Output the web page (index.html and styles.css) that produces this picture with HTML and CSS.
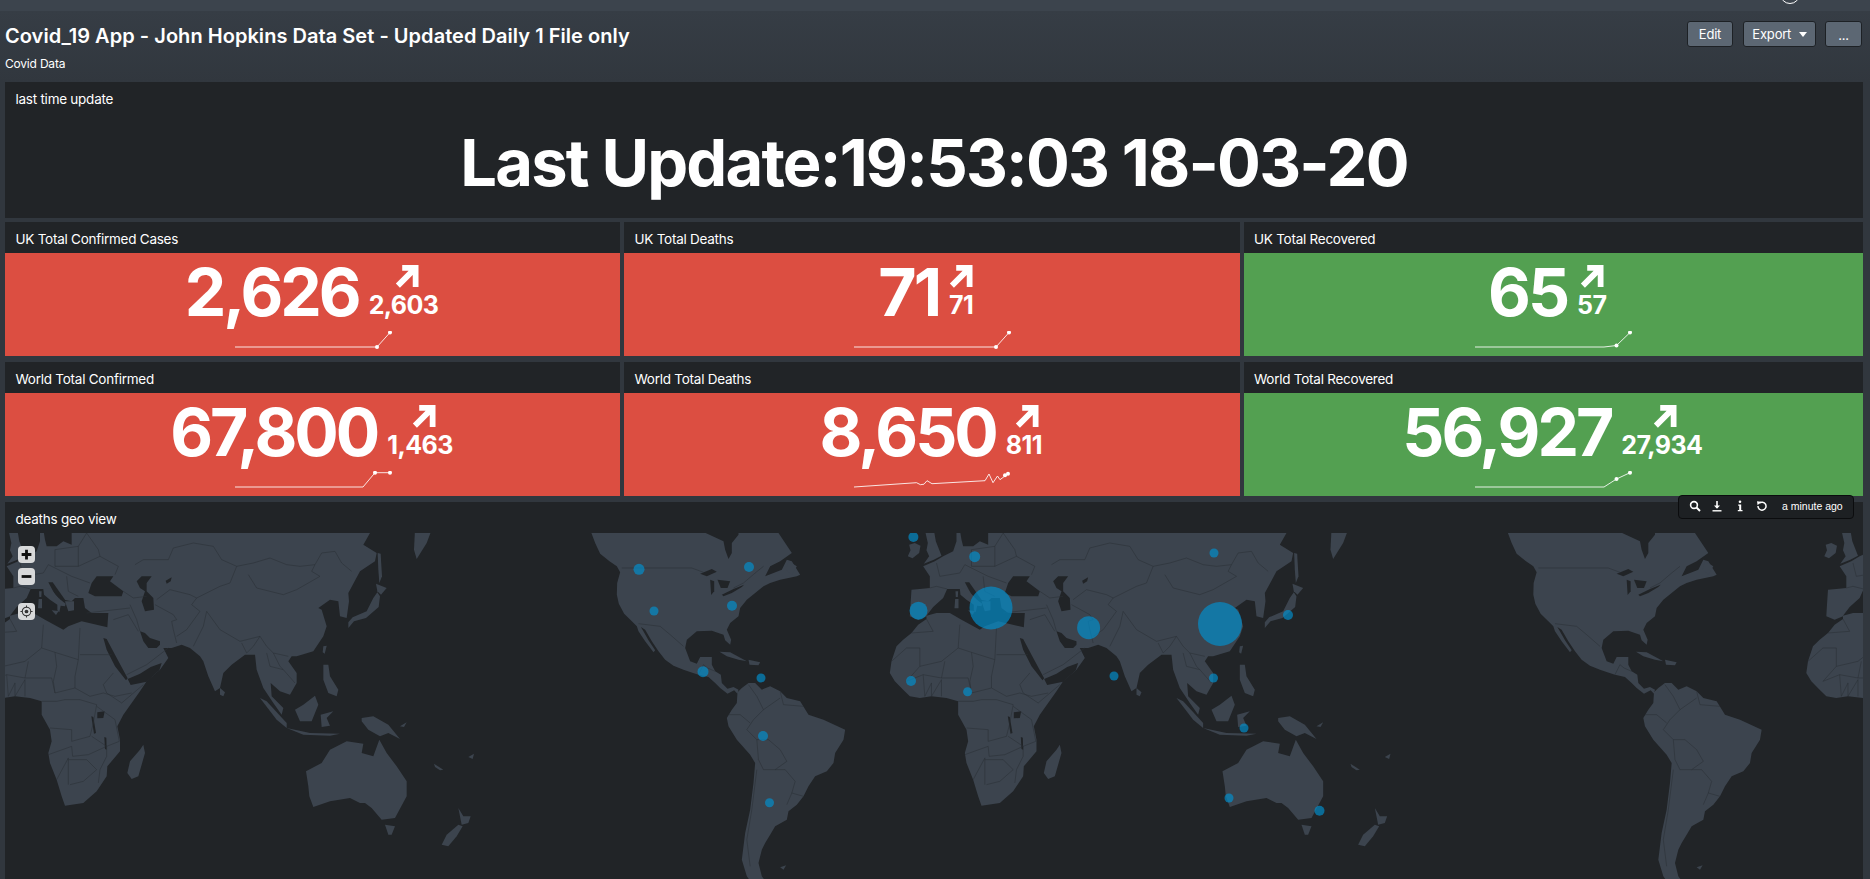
FILE: index.html
```html
<!DOCTYPE html>
<html lang="en">
<head>
<meta charset="utf-8">
<title>Covid_19 App</title>
<link rel="stylesheet" href="styles.css">
</head>
<body>
<div class="topbar"><span class="user-ring"></span></div>
<header class="dash-head">
  <div class="dash-titles">
    <h1>Covid_19 App - John Hopkins Data Set - Updated Daily 1 File only</h1>
    <p>Covid Data</p>
  </div>
  <div class="dash-actions">
    <button class="btn btn-edit">Edit</button>
    <button class="btn btn-export">Export <i class="caret"></i></button>
    <button class="btn btn-more">...</button>
  </div>
</header>

<svg class="defs" width="0" height="0" aria-hidden="true">
  <defs>
    <g id="arrow"><path d="M7 3H21V23M21 3L2.5 21.5" fill="none" stroke="#fff" stroke-width="6"/></g>
    <g id="world">
      <g class="land">
        <!-- Afro-Eurasia -->
        <path d="M120,-10 120,25 110,55 80,70 55,85 20,100 40,130 40,165 10,168 -15,170 -18,215 -20,250 5,260 30,250 30,258 5,275 -15,300 -40,320 -60,340 -75,385 -80,420 -65,445 -40,470 -20,490 10,495 45,490 90,495 125,505 125,545 150,590 155,625 145,660 150,690 170,740 185,790 195,818 250,810 290,775 320,730 322,700 360,655 360,620 352,580 370,545 420,475 440,445 480,410 505,375 490,345 515,345 545,335 570,345 600,370 610,385 625,430 645,475 660,465 670,420 695,395 735,365 765,365 770,410 790,465 820,510 845,545 850,525 815,490 812,450 840,475 870,485 890,450 890,420 865,385 875,370 890,370 940,355 970,310 980,280 965,230 955,225 990,200 1015,205 1020,250 1040,255 1047,205 1045,180 1080,115 1125,85 1130,60 1090,35 1110,0 1115,-10Z"/>
        <!-- Ireland, Great Britain -->
        <path d="M-22,35 -5,30 12,38 8,60 -12,76 -26,70 -18,52Z"/>
        <path d="M25,-10 52,-10 58,25 68,50 75,68 52,80 22,92 38,70 30,52 34,30Z"/>
        <!-- Madagascar, Sri Lanka -->
        <path d="M430,635 435,660 415,730 395,738 382,720 390,685 420,650Z"/>
        <path d="M660,465 675,478 670,490 660,485Z"/>
        <g transform="translate(840 0)">
          <!-- Kamchatka, Sakhalin, Japan -->
          <path d="M405,-10 455,-10 440,30 410,78 402,50Z"/>
          <path d="M293,60 302,62 306,130 298,150 295,110Z"/>
          <path d="M205,285 205,268 218,253 260,235 280,195 292,178 300,190 296,222 258,255 222,265Z"/>
          <path d="M288,152 320,165 303,185 292,175Z"/>
          <path d="M130,340 140,338 134,362 128,358Z"/>
          <path d="M130,395 145,395 150,430 175,470 170,490 145,480 130,440Z"/>
          <path d="M45,530 70,515 105,488 115,515 95,565 60,565Z"/>
          <path d="M122,545 160,535 140,555 150,578 125,582Z"/>
          <path d="M245,555 280,550 325,575 360,618 325,600 300,610 265,590 245,565Z"/>
          <path d="M20,585 90,600 180,602 150,608 70,605Z"/>
          <path d="M-60,495 -40,505 20,570 20,585 -10,560Z"/>
          <path d="M78,715 125,690 150,650 200,625 250,632 245,660 280,670 298,620 320,660 350,700 380,745 380,790 345,855 305,860 275,825 255,810 240,810 210,795 150,805 100,822 88,790 85,760Z"/>
          <path d="M315,875 345,880 335,905 325,905Z"/>
          <path d="M485,935 500,905 535,875 548,880 530,910 505,940Z"/>
          <path d="M535,825 550,850 572,850 565,870 545,875 540,850Z"/>
          <path d="M462,692 490,710 480,712 465,702Z"/>
          <path d="M565,672 582,662 578,678Z"/>
          <path d="M360,580 380,568 372,582Z"/>
        </g>
        <g transform="translate(-999 0)">
          <!-- North & Central America -->
          <path d="M20,-10 35,30 50,62 78,85 100,100 110,118 101,150 100,185 106,212 122,242 145,265 160,280 165,295 185,325 210,358 215,352 195,322 178,292 172,282 185,290 205,325 225,355 245,380 270,398 300,410 322,418 345,425 375,432 395,450 410,465 432,482 452,472 462,482 465,470 450,462 432,467 415,450 412,425 395,415 385,395 385,372 350,372 340,392 320,385 305,345 310,320 340,295 385,293 420,305 425,322 440,335 443,320 430,290 440,270 465,250 470,225 490,200 515,180 540,160 560,150 590,140 640,130 650,125 625,85 610,80 595,110 545,130 560,100 590,85 625,60 585,0 580,-10 465,-10 465,5 445,30 445,60 435,78 425,50 420,25 345,-10Z"/>
          <path d="M615,85 640,100 625,125 608,110Z"/>
          <!-- Caribbean -->
          <path d="M408,356 440,358 490,385 465,380 430,370Z"/>
          <path d="M495,380 530,388 525,397 498,395Z"/>
          <!-- South America -->
          <path d="M462,478 475,465 495,450 515,450 535,470 560,460 590,475 610,495 650,505 675,545 720,560 785,590 780,620 755,660 750,690 730,715 695,730 675,760 660,790 640,815 615,835 610,860 575,880 560,905 545,930 535,950 525,990 535,1030 550,1050 505,1050 490,1030 475,980 485,900 500,830 510,750 515,690 500,665 460,620 435,580 430,555 445,530 460,510Z"/>
          <path d="M590,1003 608,997 600,1010Z"/>
        </g>
      </g>
      <g class="water">
        <path d="M130,-10 215,-10 215,35 190,25 170,40 140,40 135,20Z"/>
        <path d="M30,248 50,222 80,195 92,168 130,168 165,195 215,205 225,195 250,195 255,225 275,240 325,240 322,283 245,265 205,280 190,290 135,260 100,240 60,240Z"/>
        <path d="M145,148 158,148 195,200 190,208 165,185Z"/>
        <path d="M265,180 275,150 290,130 340,130 330,145 370,175 365,190 315,190 285,190Z"/>
        <path d="M410,145 425,130 455,130 440,150 440,175 460,195 462,230 435,235 425,205 435,175 420,165Z"/>
        <path d="M497,143 515,133 512,145 500,152Z"/>
        <path d="M310,315 320,318 345,365 383,436 378,442 345,400 320,350Z"/>
        <path d="M383,438 420,422 452,402 485,390 478,412 440,446 392,456Z"/>
        <path d="M420,295 435,300 450,315 480,325 480,335 470,345 445,345 430,325Z"/>
        <path d="M292,538 314,535 310,555 292,556Z"/>
        <path d="M274,550 280,552 288,600 282,602Z"/>
        <path d="M313,612 319,614 320,650 315,648Z"/>
        <g transform="translate(-999 0)">
          <path d="M350,122 385,108 400,116 370,130Z"/>
          <path d="M380,140 392,145 392,175 383,186Z"/>
          <path d="M402,140 440,145 432,165 412,165Z"/>
          <path d="M415,185 450,168 482,155 475,162 445,180 420,190Z"/>
        </g>
      </g>
      <g class="land">
        <path d="M130,168 150,165 175,195 197,212 195,220 182,218 178,238 172,232 172,215 150,200 132,185Z"/>
        <path d="M155,232 176,234 168,246Z"/>
        <path d="M116,198 126,198 126,226 114,226Z"/>
        <path d="M117,175 125,175 124,192 118,192Z"/>
        <path d="M195,205 222,205 222,232 205,235Z"/>
      </g>
      <g class="borders">
        <polyline points="130,275 125,345 165,358 235,380 240,285"/>
        <polyline points="240,365 335,365"/>
        <polyline points="165,358 170,400 160,445 165,480 225,465 270,490 310,480 345,490 395,480"/>
        <polyline points="235,380 225,430 225,465"/>
        <polyline points="340,420 310,455 320,480 365,510 430,455"/>
        <polyline points="125,505 170,505 195,500 240,500 290,515 280,570 270,610 215,625 215,590 150,585"/>
        <polyline points="290,520 345,560 358,625 320,640 275,610"/>
        <polyline points="145,665 215,640 218,670 265,665 320,640"/>
        <polyline points="170,740 205,675 205,755"/>
        <polyline points="205,680 260,680 290,710 250,745 210,755"/>
        <polyline points="320,640 320,670 300,710 295,750"/>
        <polyline points="-75,385 -30,345 10,345 10,400 75,385 125,345"/>
        <polyline points="10,400 -30,445 20,425 75,435 85,385"/>
        <polyline points="20,425 25,490 45,450 45,490 75,440 75,490"/>
        <polyline points="75,435 155,435 165,480"/>
        <polyline points="30,258 50,295 -15,300"/>
        <polyline points="405,95 430,80 505,80 520,45 580,30 640,40 665,80 710,100 760,90 810,75 860,95 900,100 945,95 965,60 1005,55 1025,90 1055,115"/>
        <polyline points="745,125 770,165 850,185 890,170 960,130 935,115 945,95"/>
        <polyline points="710,100 690,150 660,160 590,195 575,215"/>
        <polyline points="470,200 510,170 570,185 590,195"/>
        <polyline points="465,215 520,245 530,260 515,265 520,290 530,330"/>
        <polyline points="575,215 600,235 560,290 530,310"/>
        <polyline points="620,235 610,280 580,340"/>
        <polyline points="620,235 660,290 720,325 780,310 800,340 820,360 865,370"/>
        <polyline points="725,330 740,360 760,340 780,310"/>
        <polyline points="800,360 810,400 850,410 885,450"/>
        <polyline points="820,360 840,400 850,410"/>
        <polyline points="390,215 410,260 420,295"/>
        <polyline points="260,240 390,225"/>
        <polyline points="340,260 385,245 415,295"/>
        <polyline points="380,425 440,395 505,345"/>
        <polyline points="370,175 400,195 440,190"/>
        <polyline points="300,70 355,100 345,125"/>
        <polyline points="165,50 235,40 235,100 165,100 165,50"/>
        <polyline points="145,95 215,130 270,150"/>
        <polyline points="235,40 260,0 295,50 300,70"/>
        <polyline points="235,100 300,70"/>
        <polyline points="60,90 70,130 130,120 145,95"/>
        <polyline points="40,165 60,160 92,168"/>
        <polyline points="200,130 205,175 235,190"/>
        <g transform="translate(-999 0)">
          <polyline points="115,105 325,105 360,118"/>
          <polyline points="165,272 230,280 260,305 300,340"/>
          <polyline points="540,100 515,120 480,150 450,165"/>
          <polyline points="345,425 360,395 372,405 395,415"/>
          <polyline points="495,455 520,490 540,530 510,560 490,590 520,620 555,620 590,650 610,685 575,710 605,710 635,745 625,780 610,815"/>
          <polyline points="590,475 600,515 660,520"/>
          <polyline points="540,530 590,495"/>
          <polyline points="435,545 470,545 500,570"/>
          <polyline points="520,620 525,680 540,710 575,710"/>
          <polyline points="520,710 505,830 490,920 500,1000"/>
          <polyline points="625,780 660,790"/>
        </g>
      </g>
    </g>
  </defs>
</svg>

<main class="dash">
  <section class="panel panel-update">
    <h2>last time update</h2>
    <div class="update-text">Last Update:19:53:03 18-03-20</div>
  </section>

  <div class="kpi-grid">
    <section class="panel">
      <h2>UK Total Confirmed Cases</h2>
      <div class="kpi red">
        <div class="kpi-row">
          <span class="kpi-value">2,626</span>
          <span class="kpi-delta"><svg class="arrow" viewBox="0 0 24 24"><use href="#arrow"/></svg><b>2,603</b></span>
        </div>
        <svg class="spark" viewBox="0 0 158 20"><polyline points="0,16 142,16 155,1.5"/><circle cx="142" cy="16" r="2"/><circle cx="155" cy="1.5" r="2"/></svg>
      </div>
    </section>
    <section class="panel">
      <h2>UK Total Deaths</h2>
      <div class="kpi red">
        <div class="kpi-row kpi-row-short">
          <span class="kpi-value">71</span>
          <span class="kpi-delta"><svg class="arrow" viewBox="0 0 24 24"><use href="#arrow"/></svg><b>71</b></span>
        </div>
        <svg class="spark" viewBox="0 0 158 20"><polyline points="0,16 142,16 155,1.5"/><circle cx="142" cy="16" r="2"/><circle cx="155" cy="1.5" r="2"/></svg>
      </div>
    </section>
    <section class="panel">
      <h2>UK Total Recovered</h2>
      <div class="kpi green">
        <div class="kpi-row kpi-row-short">
          <span class="kpi-value">65</span>
          <span class="kpi-delta"><svg class="arrow" viewBox="0 0 24 24"><use href="#arrow"/></svg><b>57</b></span>
        </div>
        <svg class="spark" viewBox="0 0 158 20"><polyline points="0,16 129,16 141.5,14.5 155,1.5"/><circle cx="141.5" cy="14.5" r="2"/><circle cx="155" cy="1.5" r="2"/></svg>
      </div>
    </section>
    <section class="panel">
      <h2>World Total Confirmed</h2>
      <div class="kpi red">
        <div class="kpi-row">
          <span class="kpi-value">67,800</span>
          <span class="kpi-delta"><svg class="arrow" viewBox="0 0 24 24"><use href="#arrow"/></svg><b>1,463</b></span>
        </div>
        <svg class="spark" viewBox="0 0 158 20"><polyline points="0,16 128,16 140,1.7 155,1.7"/><circle cx="140" cy="1.7" r="2"/><circle cx="155" cy="1.7" r="2"/></svg>
      </div>
    </section>
    <section class="panel">
      <h2>World Total Deaths</h2>
      <div class="kpi red">
        <div class="kpi-row">
          <span class="kpi-value">8,650</span>
          <span class="kpi-delta"><svg class="arrow" viewBox="0 0 24 24"><use href="#arrow"/></svg><b>811</b></span>
        </div>
        <svg class="spark" viewBox="0 0 158 20"><polyline points="0,16 62.5,11.7 66.5,13.7 70,13.2 73,9.7 78,12.7 131,9.7 135,3 139,11.7 143.5,5 146,8.7 154,2.7"/><circle cx="151" cy="4.2" r="2"/><circle cx="154" cy="2.7" r="2"/></svg>
      </div>
    </section>
    <section class="panel">
      <h2>World Total Recovered</h2>
      <div class="kpi green">
        <div class="kpi-row">
          <span class="kpi-value">56,927</span>
          <span class="kpi-delta"><svg class="arrow" viewBox="0 0 24 24"><use href="#arrow"/></svg><b>27,934</b></span>
        </div>
        <svg class="spark" viewBox="0 0 158 20"><polyline points="0,16 129,16 141.5,8 155,1.7"/><circle cx="141.5" cy="8" r="2"/><circle cx="155" cy="1.7" r="2"/></svg>
      </div>
    </section>
  </div>

  <section class="panel panel-map">
    <h2>deaths geo view</h2>
    <div class="map">
      <svg class="map-svg" viewBox="5 533 1858 346">
        <g transform="translate(0 533) scale(.33333)">
          <use href="#world"/>
          <use href="#world" x="2749.5"/>
          <use href="#world" x="5499"/>
        </g>
        <g class="bubbles">
          <circle cx="639" cy="569.3" r="5.5"/><circle cx="749" cy="567" r="5"/><circle cx="654" cy="611" r="4.5"/>
          <circle cx="732" cy="605.7" r="5"/><circle cx="703" cy="671.7" r="5.5"/><circle cx="761" cy="678" r="4.5"/>
          <circle cx="763" cy="736" r="5"/><circle cx="769.5" cy="802.7" r="4.5"/><circle cx="913.4" cy="537" r="5"/>
          <circle cx="974.7" cy="556.7" r="5.5"/><circle cx="918.5" cy="610.7" r="9"/><circle cx="991" cy="608" r="21.5"/>
          <circle cx="911" cy="681" r="5"/><circle cx="967.6" cy="691.7" r="4.5"/><circle cx="1088.6" cy="627.7" r="11.5"/>
          <circle cx="1114" cy="676" r="4.5"/><circle cx="1214" cy="553" r="4.5"/><circle cx="1213.5" cy="678" r="4.5"/>
          <circle cx="1220" cy="624" r="22"/><circle cx="1229" cy="798" r="4.5"/><circle cx="1288" cy="615" r="5"/>
          <circle cx="1319.5" cy="810.7" r="5"/><circle cx="1244" cy="728" r="4.5"/>
        </g>
      </svg>
      <div class="map-controls">
        <button class="map-btn" aria-label="Zoom in"><svg viewBox="0 0 12 12"><path d="M6 1.5V10.5M1.5 6H10.5" stroke="#111" stroke-width="2.6" fill="none"/></svg></button>
        <button class="map-btn" aria-label="Zoom out"><svg viewBox="0 0 12 12"><path d="M1.5 6H10.5" stroke="#111" stroke-width="2.6" fill="none"/></svg></button>
        <button class="map-btn map-btn-locate" aria-label="Reset"><svg viewBox="0 0 14 14"><circle cx="7" cy="7" r="4.6" stroke="#333" stroke-width="1.1" fill="none"/><circle cx="7" cy="7" r="2" fill="#333"/><path d="M7 .5V2.5M7 11.5V13.5M.5 7H2.5M11.5 7H13.5" stroke="#333" stroke-width="1.1"/></svg></button>
      </div>
    </div>
    <div class="toolbar">
      <svg viewBox="0 0 12 12"><circle cx="5" cy="5" r="3.4" fill="none" stroke="#fff" stroke-width="1.6"/><path d="M7.5 7.5L11 11" stroke="#fff" stroke-width="2"/></svg>
      <svg viewBox="0 0 12 12"><path d="M6 1V8" stroke="#fff" stroke-width="1.6"/><path d="M3 5.5L6 8.8L9 5.5Z" fill="#fff"/><path d="M1.5 10.8H10.5" stroke="#fff" stroke-width="1.4"/></svg>
      <svg viewBox="0 0 12 12"><circle cx="6" cy="1.8" r="1.3" fill="#fff"/><path d="M4.2 4.5H7.2V10H8.5V11.2H3.8V10H5.2V5.7H4.2Z" fill="#fff"/></svg>
      <svg viewBox="0 0 12 12"><path d="M3.2 3.3A4 4 0 1 1 2 6" fill="none" stroke="#fff" stroke-width="1.5"/><path d="M1 1.2L5 1.8L1.6 5.2Z" fill="#fff"/></svg>
      <span>a minute ago</span>
    </div>
  </section>
</main>
</body>
</html>
```

FILE: styles.css
```css
* { box-sizing: border-box; }
html, body { margin: 0; height: 100%; overflow: hidden; }
body {
  background: #31373e;
  color: #fff;
  font-family: "Inter", "Liberation Sans", sans-serif;
  width: 1870px;
  height: 879px;
}
.defs { position: absolute; }

.topbar {
  height: 11px;
  background: #3c444d;
  display: flex;
  justify-content: flex-end;
  overflow: hidden;
  padding-right: 70px;
}
.user-ring {
  width: 20px;
  height: 20px;
  border: 1.5px solid #fff;
  border-radius: 50%;
  margin-top: -16.5px;
}

.dash-head {
  height: 71px;
  padding: 10px 8px 0 5px;
  display: flex;
  justify-content: space-between;
  align-items: flex-start;
  background: linear-gradient(#363d45, #31373e);
}
.dash-titles h1 {
  margin: 2px 0 0;
  font-size: 20px;
  line-height: 26px;
  font-weight: 600;
  letter-spacing: .04px;
}
.dash-titles p {
  margin: 7px 0 0;
  font-size: 12px;
  line-height: 16px;
  letter-spacing: -.2px;
}
.dash-actions { display: flex; }
.btn {
  height: 26px;
  background: #5c6773;
  border: 1px solid #1d2125;
  border-radius: 3px;
  color: #fff;
  font: 13px/1 "Inter", "Liberation Sans", sans-serif;
  letter-spacing: -.2px;
  padding: 0;
}
.btn-edit { width: 46px; margin-right: 10px; }
.btn-export { width: 73px; margin-right: 9px; }
.btn-more { width: 37px; padding-top: 2px; }
.caret {
  display: inline-block;
  border: 4px solid transparent;
  border-top: 5px solid #fff;
  border-bottom: 0;
  margin-left: 4px;
  vertical-align: 2px;
}

.dash {
  padding: 0 7px 0 5px;
  display: flex;
  flex-direction: column;
  gap: 4px;
}
.panel { background: #212427; position: relative; }
.panel h2 {
  margin: 0;
  height: 31px;
  padding: 0 10.5px;
  font-size: 13.5px;
  line-height: 35px;
  font-weight: 400;
  letter-spacing: -.25px;
}
.panel-update { height: 136px; }
.update-text {
  text-align: center;
  font-size: 65px;
  line-height: 76px;
  font-weight: 700;
  letter-spacing: -1.8px;
  padding-top: 12px;
}

.kpi-grid {
  display: grid;
  grid-template-columns: 615px 615.5px 619.5px;
  grid-auto-rows: 134px;
  column-gap: 4px;
  row-gap: 6px;
}
.kpi {
  height: 103px;
  display: flex;
  flex-direction: column;
  align-items: center;
}
.red { background: #dc4e41; }
.green { background: #53a051; }
.kpi-row {
  height: 74px;
  display: flex;
  align-items: flex-start;
  gap: 10px;
  padding: 6px 2px 0 0;
}
.kpi-row-short { padding-right: 12px; }
.kpi-value {
  font-size: 66px;
  line-height: 66px;
  font-weight: 700;
  letter-spacing: -3px;
}
.kpi-delta {
  display: flex;
  flex-direction: column;
  align-items: center;
  padding-top: 6px;
}
.kpi-delta b {
  font-size: 25px;
  line-height: 25px;
  font-weight: 700;
  letter-spacing: -.6px;
  margin-top: 5px;
}
.arrow { width: 24px; height: 23px; display: block; margin-left: 7px; }
.kpi-row-short .arrow { margin-left: 0; }
.spark { width: 158px; height: 20px; margin: 4px 0 0 2px; }
.spark polyline { fill: none; stroke: #fff; stroke-opacity: .85; stroke-width: 1; }
.spark circle { fill: #fff; }

.panel-map { margin-top: 2px; height: 377px; }
.map { position: relative; height: 346px; overflow: hidden; }
.map-svg { display: block; width: 1858px; height: 346px; background: #212427; }
.land { fill: #3c444e; }
.water { fill: #212427; }
.borders polyline { fill: none; stroke: #2a2f35; stroke-width: 1.6; }
.bubbles circle { fill: rgba(0, 145, 210, .66); }

.map-controls {
  position: absolute;
  left: 13px;
  top: 13px;
  display: flex;
  flex-direction: column;
  gap: 5px;
}
.map-btn {
  width: 17px;
  height: 17px;
  padding: 2px;
  border: 0;
  border-radius: 4px;
  background: #d8d9da;
  display: block;
}
.map-btn svg { display: block; width: 13px; height: 13px; }
.map-btn-locate { margin-top: 13px; }

.toolbar {
  position: absolute;
  right: 9px;
  top: -7px;
  width: 176px;
  height: 24px;
  padding: 0 0 3px 9.5px;
  background: #1d2023;
  border: 1px solid #0b0c0e;
  border-radius: 4px;
  display: flex;
  align-items: center;
  gap: 10.5px;
}
.toolbar svg { width: 12px; height: 12px; flex: none; }
.toolbar span { font: 10.5px "Liberation Sans", sans-serif; margin-left: 3.5px; white-space: nowrap; }
```
